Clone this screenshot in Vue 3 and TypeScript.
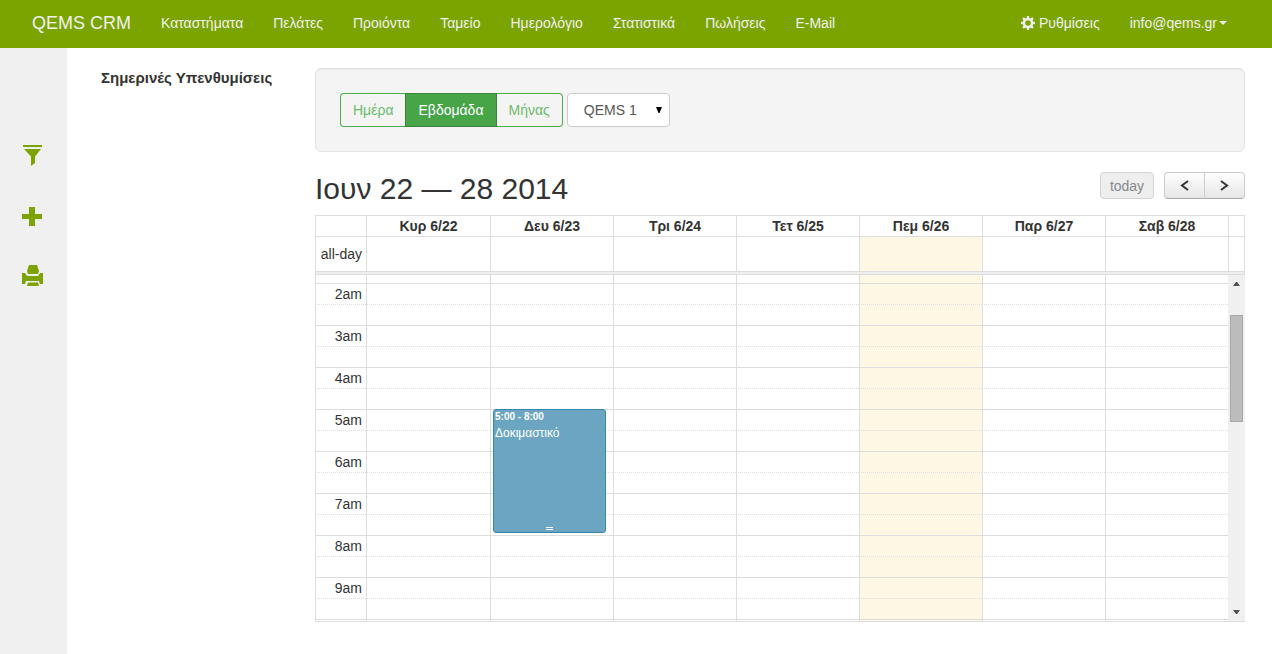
<script setup lang="ts">
import { ref } from 'vue'

interface Day { label: string; today: boolean }
interface Slot { label: string; half: boolean; event: boolean }

const navItems: string[] = [
  'Καταστήματα', 'Πελάτες', 'Προιόντα', 'Ταμείο', 'Ημερολόγιο', 'Στατιστικά', 'Πωλήσεις', 'E-Mail',
]
const views: string[] = ['Ημέρα', 'Εβδομάδα', 'Μήνας']
const activeView = ref('Εβδομάδα')
const store = ref('QEMS 1')

const days: Day[] = [
  { label: 'Κυρ 6/22', today: false },
  { label: 'Δευ 6/23', today: false },
  { label: 'Τρι 6/24', today: false },
  { label: 'Τετ 6/25', today: false },
  { label: 'Πεμ 6/26', today: true },
  { label: 'Παρ 6/27', today: false },
  { label: 'Σαβ 6/28', today: false },
]
const eventDay = 1

const slots: Slot[] = [2, 3, 4, 5, 6, 7, 8, 9].flatMap((hour) => [
  { label: `${hour}am`, half: false, event: hour === 5 },
  { label: '', half: true, event: false },
])
</script>

<template>
  <div class="page">
    <header class="navbar">
      <a class="brand" href="#">QEMS CRM</a>
      <nav class="links">
        <a v-for="item in navItems" :key="item" href="#">{{ item }}</a>
      </nav>
      <nav class="links account">
        <a href="#">
          <svg class="gear" viewBox="0 0 14 14" width="14" height="14" aria-hidden="true">
            <g fill="currentColor">
              <path fill-rule="evenodd" d="M7 1.700a5.300 5.300 0 1 0 0 10.600A5.300 5.300 0 0 0 7 1.700zM7 4.200a2.800 2.800 0 1 1 0 5.600 2.800 2.800 0 0 1 0-5.600z" />
              <g v-for="n in 4" :key="n" :transform="`rotate(${n * 45} 7 7)`">
                <path d="M5.600 3 6 0h2l.4 3zM5.600 11 6 14h2l.4-3z" />
              </g>
            </g>
          </svg>
          <span>Ρυθμίσεις</span>
        </a>
        <a class="user" href="#">info@qems.gr<i class="caret"></i></a>
      </nav>
    </header>

    <div class="body">
      <aside class="sidebar">
        <button type="button" aria-label="Φίλτρα">
          <svg viewBox="0 0 22 22" width="22" height="22"><path fill="currentColor" d="M1 0h19v2H1zM2 4h17l-6 7.500V18L9 21v-9.500z" /></svg>
        </button>
        <button type="button" aria-label="Προσθήκη">
          <svg viewBox="0 0 22 22" width="22" height="22"><path fill="currentColor" d="M7 2h6v7h7v5h-7v7H7v-7H0V9h7z" /></svg>
        </button>
        <button type="button" aria-label="Εκτύπωση">
          <svg viewBox="0 0 22 22" width="22" height="22"><path fill="currentColor" d="M7 0h8l2 6-1 3H6L5 6zM0 8h3l2 3h11l2-3h3v11h-3l-1-3H4l-1 3H0zM6 17.500h10l1 3.500H5z" /></svg>
        </button>
      </aside>

      <section class="reminders">
        <h1>Σημερινές Υπενθυμίσεις</h1>
      </section>

      <main class="content">
        <div class="well">
          <div class="group" role="group">
            <button
              v-for="view in views" :key="view" type="button"
              :class="{ active: view === activeView }" @click="activeView = view"
            >{{ view }}</button>
          </div>
          <div class="picker">
            <select v-model="store" aria-label="Κατάστημα">
              <option>QEMS 1</option>
            </select>
            <svg viewBox="0 0 6 6" width="6" height="6" aria-hidden="true"><path d="M0 0h6L3.500 6h-1z" /></svg>
          </div>
        </div>

        <div class="toolbar">
          <h2>Ιουν 22 — 28 2014</h2>
          <button class="tool today-btn" type="button" disabled>today</button>
          <div class="pager">
            <button class="tool" type="button" aria-label="Προηγούμενη">
              <svg viewBox="0 0 9 11" width="9" height="11"><path d="M8 1 2 5.500 8 10" fill="none" stroke="#333" stroke-width="2" /></svg>
            </button>
            <button class="tool" type="button" aria-label="Επόμενη">
              <svg viewBox="0 0 9 11" width="9" height="11"><path d="M1 1l6 4.500L1 10" fill="none" stroke="#333" stroke-width="2" /></svg>
            </button>
          </div>
        </div>

        <div class="calendar">
          <table class="head">
            <thead>
              <tr>
                <th class="axis"></th>
                <th v-for="day in days" :key="day.label" scope="col">{{ day.label }}</th>
                <th class="gutter"></th>
              </tr>
            </thead>
            <tbody>
              <tr class="all-day">
                <th class="axis" scope="row">all-day</th>
                <td v-for="day in days" :key="day.label" :class="{ today: day.today }"></td>
                <td class="gutter"></td>
              </tr>
            </tbody>
          </table>
          <div class="divider"></div>
          <div class="viewport">
            <table class="slots">
              <tbody>
                <tr class="cut-top">
                  <th class="axis"></th>
                  <td v-for="day in days" :key="day.label" :class="{ today: day.today }"></td>
                </tr>
                <tr v-for="(slot, i) in slots" :key="i" :class="{ half: slot.half }">
                  <th class="axis" scope="row">{{ slot.label }}</th>
                  <td v-for="(day, d) in days" :key="day.label" :class="{ today: day.today }">
                    <a v-if="slot.event && d === eventDay" class="event" href="#">
                      <span class="time">5:00 - 8:00</span>
                      <span class="title">Δοκιμαστικό</span>
                      <span class="grip"></span>
                    </a>
                  </td>
                </tr>
                <tr class="cut-bottom">
                  <th class="axis"></th>
                  <td v-for="day in days" :key="day.label" :class="{ today: day.today }"></td>
                </tr>
              </tbody>
            </table>
            <div class="scrollbar" aria-hidden="true">
              <svg viewBox="0 0 7 4" width="7" height="4"><path d="M3 0h1l3 4H0z" /></svg>
              <div class="track"><div class="thumb"></div></div>
              <svg viewBox="0 0 7 4" width="7" height="4"><path d="M0 0h7L4 4H3z" /></svg>
            </div>
          </div>
        </div>
      </main>
    </div>
  </div>
</template>

<style>
body {
  margin: 0;
  background: #fff;
}
</style>

<style scoped>
* {
  box-sizing: border-box;
}
.page {
  display: flex;
  flex-direction: column;
  min-height: 100vh;
  font: 14px/20px "Liberation Sans", Arial, sans-serif;
  color: #333;
}
button,
select {
  font: inherit;
  margin: 0;
}
a {
  color: inherit;
  text-decoration: none;
}
.navbar {
  display: flex;
  align-items: center;
  height: 48px;
  padding: 0 30px 2px 17px;
  background: #7ba400;
  color: #f0f0f0;
  white-space: nowrap;
}
.brand {
  padding: 0 15px;
  font-size: 18px;
}
.links {
  display: flex;
}
.links a {
  display: flex;
  align-items: center;
  padding: 0 15px;
}
.account {
  margin-left: auto;
}
.gear {
  margin-right: 4px;
}
.links .user {
  gap: 2px;
}
.caret {
  border: 4px solid transparent;
  border-top-color: currentColor;
  border-bottom: 0;
}
.body {
  display: flex;
  flex: 1;
}
.sidebar {
  display: flex;
  flex-direction: column;
  align-items: center;
  gap: 38px;
  width: 67px;
  padding: 97px 2px 0 0;
  background: #f0f0f0;
}
.sidebar button {
  height: 22px;
  padding: 0;
  border: 0;
  background: none;
  color: #7ba400;
}
.sidebar svg {
  display: block;
}
.reminders {
  width: 248px;
  padding: 20px 0 0 34px;
}
h1 {
  margin: 0;
  font-size: 15px;
  line-height: 20px;
}
.content {
  flex: 1;
  min-width: 0;
  padding: 20px 27px 20px 0;
}
.well {
  display: flex;
  gap: 4px;
  padding: 24px;
  border: 1px solid #e3e3e3;
  border-radius: 6px;
  background: #f4f4f4;
  box-shadow: inset 0 1px 1px rgba(0, 0, 0, 0.05);
}
.group {
  display: flex;
}
.group button {
  height: 34px;
  padding: 0 12px;
  border: 1px solid #4cae4c;
  background: transparent;
  color: #6dbb6d;
}
.group button:first-child {
  border-right: 0;
  border-radius: 4px 0 0 4px;
}
.group button:last-child {
  border-left: 0;
  border-radius: 0 4px 4px 0;
}
.group .active {
  border-color: #398439;
  background: #47a447;
  color: #fff;
}
.picker {
  position: relative;
}
.picker select {
  appearance: none;
  width: 103px;
  height: 34px;
  padding: 0 16px;
  border: 1px solid #ccc;
  border-radius: 4px;
  background: #fff;
  color: #555;
}
.picker svg {
  position: absolute;
  top: 14px;
  right: 8px;
  pointer-events: none;
}
.toolbar {
  display: flex;
  align-items: center;
  height: 33px;
  margin: 20px 0 10px;
}
h2 {
  flex: 1;
  margin: 0;
  font-size: 30px;
  font-weight: 400;
  line-height: 33px;
}
.tool {
  height: 27px;
  padding: 0 8px;
  border: 1px solid #ccc;
  border-bottom-color: #aaa;
  border-radius: 4px;
  background: linear-gradient(#fff, #e6e6e6);
  color: #333;
}
.toolbar > .tool,
.pager {
  margin-bottom: 6px;
}
.today-btn {
  width: 54px;
  margin-right: 10px;
}
.today-btn:disabled {
  border-color: #d4d4d4;
  background: #eee;
  color: #888;
}
.pager {
  display: flex;
}
.pager .tool {
  display: flex;
  align-items: center;
  justify-content: center;
  width: 41px;
}
.pager .tool:first-child {
  width: 40px;
  border-right: 0;
  border-radius: 4px 0 0 4px;
}
.pager .tool:last-child {
  border-radius: 0 4px 4px 0;
}
table {
  table-layout: fixed;
  border-collapse: separate;
  border-spacing: 0;
}
th,
td {
  padding: 0;
  border: 0 solid #ddd;
  border-width: 1px 0 0 1px;
}
.axis {
  width: 51px;
  padding-right: 4px;
  font-weight: 400;
  text-align: right;
}
.axis + th,
.axis + td {
  width: 124px;
}
.head {
  width: 100%;
  border-right: 1px solid #ddd;
}
.head thead th {
  height: 21px;
}
.head .gutter {
  width: 16px;
}
.all-day th,
.all-day td {
  height: 35px;
}
.today {
  background: #fdf7e3;
}
.divider {
  height: 4px;
  border: 1px solid #ddd;
  background: #eee;
}
.viewport {
  display: flex;
  border-bottom: 1px solid #ddd;
}
.slots {
  flex: 1;
  width: 100%;
}
.slots th,
.slots td {
  height: 21px;
}
.slots .half th,
.slots .half td {
  border-top-style: dotted;
}
.slots .cut-top th,
.slots .cut-top td {
  height: 8px;
  border-top: 0;
}
.slots .cut-bottom th,
.slots .cut-bottom td {
  height: 2px;
}
.slots td {
  position: relative;
}
.event {
  position: absolute;
  z-index: 1;
  top: -1px;
  left: 2px;
  right: 7px;
  height: 124px;
  padding: 0 1px;
  border: 1px solid #3a87ad;
  border-radius: 3px;
  background: #6ba5c2;
  color: #fff;
}
.time,
.title {
  display: block;
}
.time {
  font-size: 10px;
  font-weight: 700;
  line-height: 14px;
}
.title {
  font-size: 12px;
  line-height: 18px;
}
.grip {
  position: absolute;
  bottom: 2px;
  left: 50%;
  width: 7px;
  height: 3px;
  margin-left: -4px;
  border: solid #fff;
  border-width: 1px 0;
}
.scrollbar {
  display: flex;
  flex-direction: column;
  align-items: center;
  flex: none;
  width: 17px;
  padding: 7px 0;
  background: #f0f0f0;
}
.scrollbar svg {
  fill: #505050;
}
.track {
  flex: 1;
  padding-top: 29px;
}
.thumb {
  width: 13px;
  height: 107px;
  border: 1px solid #a8a8a8;
  background: #bcbcbc;
}
</style>
